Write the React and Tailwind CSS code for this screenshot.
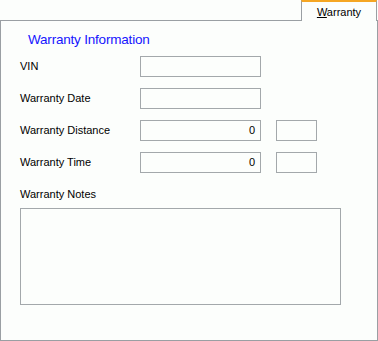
import React from "react";

const font = { fontFamily: '"Liberation Sans", Arial, sans-serif' };

const Field = ({ value = "", className = "w-[121px]" }) => (
  <div
    className={`${className} h-[21px] border border-[#a3a8ab] bg-[#fcfefc] flex items-center justify-end pr-[5px] text-[11px] text-black`}
  >
    {value}
  </div>
);

const Row = ({ label, value, unit }) => (
  <div className="flex items-center h-[21px]">
    <div className="w-[120px] text-[11px] text-black">{label}</div>
    <Field value={value} />
    {unit && <Field className="w-[41px] ml-[15px]" />}
  </div>
);

export default function App() {
  return (
    <div
      className="w-[378px] h-[341px] bg-[#fcfefc] flex flex-col select-none"
      style={font}
    >
      <div className="flex h-[21px]">
        <div className="flex-1 border-b border-[#9a9fa3]" />
        <div className="w-[76px] border-x border-[#9a9fa3] border-t-2 border-t-[#f5a623] flex items-start justify-center pt-[2px] text-[11px] text-black">
          <span>
            <span className="underline">W</span>arranty
          </span>
        </div>
        <div className="w-[1px] border-b border-[#9a9fa3]" />
      </div>
      <div className="flex-1 border-x border-b border-[#9a9fa3] px-[19px] pt-[10px]">
        <div className="pl-[8px] text-[13.5px] leading-[18px] tracking-[-0.2px] text-[#1515ff]">
          Warranty Information
        </div>
        <div className="flex flex-col gap-[11px] mt-[7px]">
          <Row label="VIN" />
          <Row label="Warranty Date" />
          <Row label="Warranty Distance" value="0" unit />
          <Row label="Warranty Time" value="0" unit />
        </div>
        <div className="mt-[14px] text-[11px] text-black leading-[14px]">
          Warranty Notes
        </div>
        <div className="mt-[7px] w-[321px] h-[97px] border border-[#a3a8ab]" />
      </div>
    </div>
  );
}
